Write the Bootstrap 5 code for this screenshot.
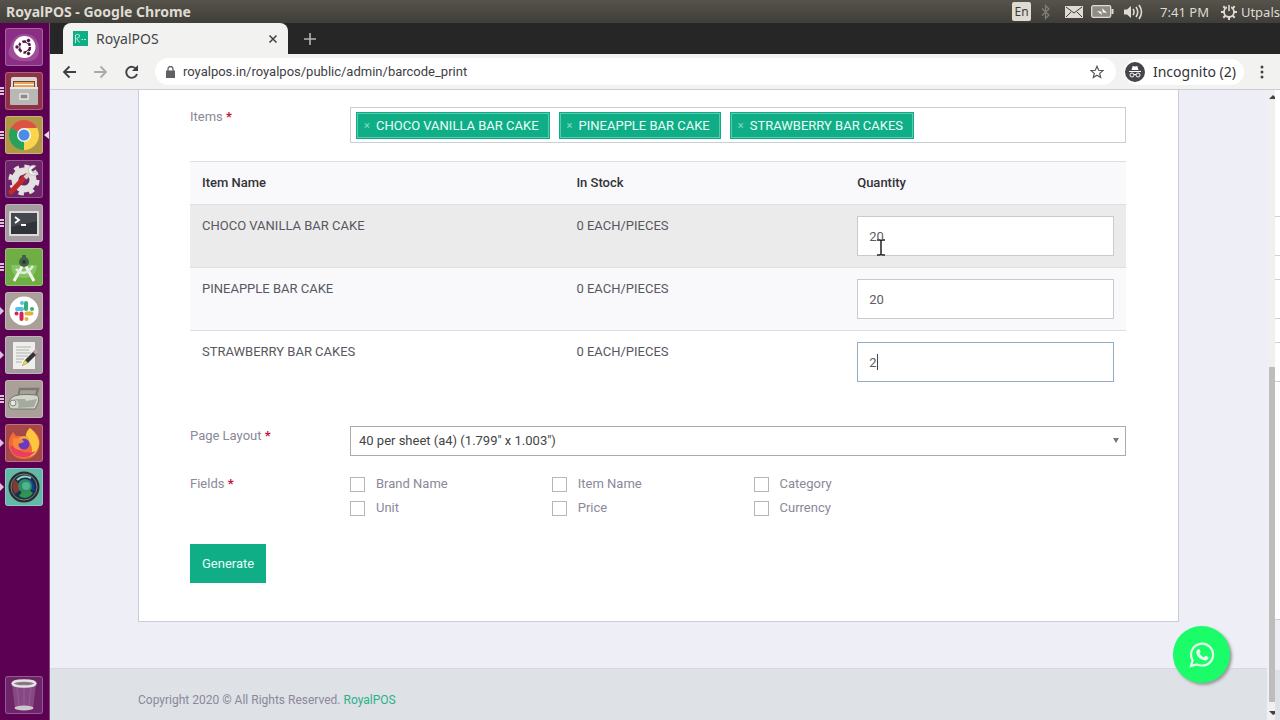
<!DOCTYPE html>
<html lang="en">
<head>
<meta charset="utf-8">
<meta name="viewport" content="width=device-width, initial-scale=1">
<title>RoyalPOS</title>
<link rel="stylesheet" href="https://cdn.jsdelivr.net/npm/bootstrap@5.3.0/dist/css/bootstrap.min.css">
<style>
:root { --green: #10ae87; --line: #ccccd4; }
body { font-family: Roboto, "Liberation Sans", sans-serif; font-size: 13px; line-height: 20px; color: #58575f; background: #eeeef7; }
.ui-font { font-family: "Noto Sans", "Open Sans", sans-serif; }
.panel-bar { height: 23px; padding-left: 6px; background: linear-gradient(#55534a, #3f3e39); color: #dfdbd2; font-size: 13px; }
.panel-bar .title-text { font-weight: 700; font-size: 14px; }
.lang-box { background: #dfdbd2; color: #3c3b37; border-radius: 2px; width: 19px; height: 19px; line-height: 19px; font-size: 12px; text-align: center; }
.launcher { width: 50px; background: #5b0052; border-right: 1px solid #8a4a84; padding: 5px 0 6px 5px; gap: 6px; }
.tile { width: 38px; height: 38px; border-radius: 3px; border: 1px solid #ffffff40; padding: 0; display: block; position: relative; flex: none; }
.tile > svg { display: block; width: 36px; height: 36px; }
.tile > svg.here { position: absolute; left: 38px; top: 14px; width: 5px; height: 8px; }
.pips { position: absolute; left: -6px; top: 12px; width: 5px; height: 12px; color: #d9c3d7; }
.pips::before { content: ""; position: absolute; left: 0; top: 2px; border: 4px solid transparent; border-left-color: currentColor; border-right: 0; }
.pips.multi::before { border: 0; width: 4px; height: 8px; background: repeating-linear-gradient(currentColor 0 2px, transparent 2px 3px); }
.t-plum { background: #8b2f84; } .t-red { background: #8d3348; } .t-gold { background: #b39749; } .t-dark { background: #6e2469; }
.t-gray { background: #a39da0; } .t-lime { background: #6fae45; } .t-stone { background: #aba099; } .t-rust { background: #a4484a; } .t-teal { background: #64b8a8; }
.tab-strip { height: 31px; background: #262626; }
.browser-tab { width: 225px; margin-left: 13px; background: #f2f2f0; border-radius: 8px 8px 0 0; color: #45464a; font-size: 14px; padding: 0 8px 0 10px; }
.bare { border: 0; background: none; padding: 0; line-height: 0; color: inherit; }
.tool-bar { height: 36px; background: #f2f2f0; border-bottom: 1px solid var(--line); color: #45464a; }
.address { background: #fff; border-radius: 14px; height: 27px; padding: 0 12px 0 11px; }
.address input { border: 0; outline: 0; background: none; font-family: Roboto, sans-serif; font-size: 13px; color: #3f4044; min-width: 0; }
.incognito { background: #fff; border-radius: 13px; height: 26px; font-size: 14px; color: #333438; padding: 0 8px 0 1px; }
.sheet { background: #fff; border: 1px solid var(--line); border-top: 0; margin: 0 88px 46px; padding: 17px 52px 38px 51px; }
.form-line { display: flex; }
.field-name { flex: 0 0 160px; color: #8b8899; }
.field-name b { color: #c8103c; }
.tag-field { border: 1px solid var(--line); min-height: 36px; padding: 4px 5px 3px; gap: 9px; }
.item-tag { background: var(--green); color: #e9fff8; height: 27px; border: 1px solid var(--green); box-shadow: inset 0 0 0 1px #5cc9ac; padding: 0 10px 0 7px; gap: 6px; }
.item-tag button { color: #8cdcc7; width: 6px; font-size: 11px; line-height: 20px; }
.stock { margin: 18px 0 33px; color: #58575f; }
.stock > :not(caption) > * > * { padding: 11px 12px; border: 0; border-top: 1px solid #dedfe3; background: transparent; box-shadow: none; color: inherit; }
.stock thead { background: #f9f9fc; color: #333238; }
.stock th { font-weight: 500; }
.stock tr.hot { background: #ebebec; } .stock tr.soft { background: #f9f9fc; }
.stock .qty { display: block; width: 100%; height: 40px; border: 1px solid #c8cad2; padding: 0 11px; color: #5c5c62; background: #fff; outline: 0; border-radius: 0; }
.stock .qty.active { border-color: #92abc8; }
.caret { position: absolute; left: 20px; top: 12px; width: 1px; height: 16px; background: #444; }
.ibeam { position: absolute; left: 20px; top: 23px; width: 8px; height: 17px; }
.pick { position: relative; margin-bottom: 18px; }
.pick select { display: block; width: 100%; height: 30px; appearance: none; border: 1px solid #aaa; border-radius: 0; background: #fff; color: #444; padding: 0 8px; outline: 0; }
.pick::after { content: ""; position: absolute; right: 7px; top: 12px; border: 3px solid transparent; border-top: 5px solid #777; border-bottom: 0; }
.checks { display: grid; grid-template-columns: 26% 26% auto; row-gap: 4px; margin-bottom: 26px; color: #8b8899; }
.checks label { display: flex; align-items: center; gap: 11px; height: 20px; }
.checks input { appearance: none; width: 15px; height: 15px; border: 1px solid #b5b5ba; background: #fff; margin: 0; }
.btn-make { --bs-btn-bg: #10ae87; --bs-btn-color: #e9fff8; --bs-btn-border-color: #10ae87; --bs-btn-hover-bg: #0d9977; --bs-btn-hover-color: #fff; --bs-btn-border-radius: 0; --bs-btn-font-size: 13px; --bs-btn-line-height: 19px; --bs-btn-padding-x: 11px; --bs-btn-padding-y: 9px; display: block; font-weight: 400; line-height: 19px; }
.page-foot { background: #dee1e6; border-top: 1px solid #d8d9e0; padding: 21px 88px 30px; color: #8b8899; font-size: 12px; }
.page-foot a { color: #2bb28b; text-decoration: none; }
.chat { position: absolute; right: 37px; bottom: 37px; width: 57px; height: 57px; border-radius: 50%; background: #1bfc69; box-shadow: 2px 2px 3px #999; border: 0; padding: 0; }
.scroller { width: 8px; background: #f0f0f0; position: relative; flex: none; }
.scroller i { position: absolute; left: 2px; right: 0; top: 44%; bottom: 18px; background: #bdbdbd; }
.scroller svg { position: absolute; left: 2px; width: 6px; height: 5px; }
.edge { width: 5px; flex: none; background: linear-gradient(#fff 84%, #ccccd4 84% 84.2%, #eeeef7 84.2% 92%, #dee1e6 92%); padding-top: 126px; }
.edge i { display: block; height: 40px; border-top: 1px solid #d0d0d4; border-bottom: 1px solid #d0d0d4; margin-bottom: 23px; }
</style>
</head>
<body>
<div class="vh-100 d-flex flex-column overflow-hidden">
  <header class="panel-bar ui-font d-flex align-items-center justify-content-between flex-shrink-0 overflow-hidden">
    <span class="title-text">RoyalPOS - Google Chrome</span>
    <div class="d-flex align-items-center text-nowrap">
      <span class="lang-box">En</span>
      <svg class="ms-2 me-1" width="14" height="16" viewBox="0 0 14 16" fill="none" stroke="#7f7d75" stroke-width="1.3"><path d="M3 4.500l7 6.500-3.500 3.500v-13L10 5 3 11.500"/></svg>
      <svg class="ms-2" width="18" height="12" viewBox="0 0 18 12"><path fill="#dfdbd2" d="M0 0h18v12H0z"/><path d="M1 1l8 6 8-6M1 11l5-5M17 11l-5-5" fill="none" stroke="#3c3b37"/></svg>
      <svg class="ms-2" width="23" height="13" viewBox="0 0 23 13"><rect x=".7" y=".7" width="19" height="11.600" rx="1.500" fill="#8e8c84" stroke="#dfdbd2" stroke-width="1.300"/><path d="M20.500 4h2v5h-2" fill="#dfdbd2"/><path d="M6 6l6 1-1-4 5 5-6-1 1 3z" fill="#fff"/></svg>
      <svg class="ms-2 me-3" width="22" height="16" viewBox="0 0 22 16"><path d="M2 5.500h3L9 2v12L5 10.500H2z" fill="#dfdbd2"/><path d="M11 5q2 3 0 6M14 3q3.500 5 0 10M17 1q5 7 0 14" fill="none" stroke="#dfdbd2" stroke-width="1.600"/></svg>
      <span class="pe-1">7:41 PM</span>
      <svg class="ms-2 me-1" width="16" height="16" viewBox="0 0 16 16" fill="none" stroke="#dfdbd2"><circle cx="8" cy="8" r="5" stroke-width="1.800"/><path d="M8 13v3M0 8h3M13 8h3M2.300 2.300l2 2M11.700 11.700l2 2M2.300 13.700l2-2M11.700 4.300l2-2" stroke-width="2"/><path d="M8 1v6" stroke="#4a4942" stroke-width="4"/><path d="M8 1v6" stroke-width="1.600"/></svg>
      <span>Utpals</span>
    </div>
  </header>

  <div class="d-flex flex-grow-1 overflow-hidden">
    <nav class="launcher d-flex flex-column flex-shrink-0" aria-label="Launcher">
      <button class="tile t-plum" aria-label="Dash"><svg viewBox="0 0 36 36"><path d="M4 18Q8 4 20 5T33 20 16 32 4 18" fill="#b469ae" opacity=".5"/><circle cx="18.500" cy="18" r="11" fill="#fff"/><circle cx="18.500" cy="18" r="5.500" fill="none" stroke="#4b1744" stroke-width="2.500" stroke-dasharray="9.500 2"/><g fill="#4b1744" stroke="#fff"><circle cx="11" cy="18" r="2.200"/><circle cx="22.500" cy="11.500" r="2.200"/><circle cx="22.500" cy="24.500" r="2.200"/></g></svg></button>
      <button class="tile t-red" aria-label="Files"><span class="pips multi"></span><svg viewBox="0 0 36 36"><path d="M5 6q0-2 2-2h22q2 0 2 2v10H5z" fill="#ddd9d2"/><path d="M7 8h22v8H7z" fill="#6b4a35"/><path d="M8 9h20v5H8z" fill="#e9a05d"/><path d="M8 11h20v1H8z" fill="#fff"/><path d="M4 14h28v17q0 1-1 1H5q-1 0-1-1z" fill="#b9b8b5"/><path d="M4 14h28v2H4z" fill="#e8e7e4"/><rect x="14" y="21" width="8" height="5" fill="#8e8d8a" stroke="#fff"/></svg></button>
      <button class="tile t-gold" aria-label="Google Chrome"><span class="pips multi"></span><svg viewBox="0 0 36 36"><path d="M18 18L5.010 10.500A15 15 0 0 1 30.990 10.500z" fill="#de5145"/><path d="M18 18L30.990 10.500A15 15 0 0 1 18 33z" fill="#fad44b"/><path d="M18 18L18 33A15 15 0 0 1 5.010 10.500z" fill="#28a15b"/><path d="M18 11h13l1 4H18z" fill="#fad44b"/><path d="M24 21l-6 12 5-1 7-12z" fill="#fad44b"/><path d="M12 21L5 11l2 14 9 2z" fill="#28a15b"/><circle cx="18" cy="18" r="7" fill="#f5f5f5"/><circle cx="18" cy="18" r="5.500" fill="#4b8bea"/></svg><svg class="here" viewBox="0 0 5 8"><path d="M5 0v8L0 4z" fill="#e6d6e4"/></svg></button>
      <button class="tile t-dark" aria-label="System Settings"><svg viewBox="0 0 36 36"><circle cx="18" cy="19" r="9" fill="none" stroke="#e3e1df" stroke-width="7"/><circle cx="18" cy="19" r="13.500" fill="none" stroke="#e3e1df" stroke-width="4" stroke-dasharray="5.300 5.300"/><path d="M5 31L20 15" stroke="#c02a2a" stroke-width="5" stroke-linecap="round"/><path d="M19 17l6-6" stroke="#d7d5d3" stroke-width="4"/><path d="M30 5a5 5 0 1 0 2 6l-5 1-2-3z" fill="#f4f3f2" stroke="#aaa" stroke-width=".6"/></svg></button>
      <button class="tile t-gray" aria-label="Terminal"><span class="pips multi"></span><svg viewBox="0 0 36 36"><rect x="3" y="6" width="30" height="25" rx="1" fill="#dcdcd8"/><rect x="5" y="8" width="26" height="21" fill="#30343a"/><path d="M5 8h26v8L5 22z" fill="#444950"/><path d="M9 12l4 3-4 3M15 20h5" fill="none" stroke="#fff" stroke-width="1.800"/></svg></button>
      <button class="tile t-lime" aria-label="Android Studio"><span class="pips multi"></span><svg viewBox="0 0 36 36"><path d="M5 16h26q-1 13-13 13T5 16" fill="#84c663"/><path d="M18 14L8 32M18 14l10 18" stroke="#f2f5ef" stroke-width="3"/><path d="M10 20q8 9 17-3" fill="none" stroke="#e5ebe0" stroke-width="2.500"/><circle cx="18" cy="13" r="5" fill="#44604b"/><path d="M16 6h4v4h-4z" fill="#44604b"/><circle cx="18" cy="13" r="2" fill="#243d30"/></svg></button>
      <button class="tile t-stone" aria-label="Slack"><span class="pips"></span><svg viewBox="0 0 36 36"><circle cx="18" cy="18" r="14.500" fill="#fff"/><g stroke-width="4" stroke-linecap="round"><path d="M11 16h5M16 10v.1" stroke="#4cc4e8"/><path d="M20 10v6M26 16v.1" stroke="#36ae7c"/><path d="M20.500 20.500h5M20.500 26v.1" stroke="#e6b03a"/><path d="M15.500 20.500v5.500M10.500 20.500v.1" stroke="#d32658"/></g></svg></button>
      <button class="tile t-gray" aria-label="Text Editor"><span class="pips"></span><svg viewBox="0 0 36 36"><path d="M7 5h22v27H7z" fill="#eeeeea"/><path d="M10 10h15M10 13h13M10 16h15M10 19h12M10 22h8M10 25h6" stroke="#b0b0ad"/><path d="M16 29l3-6L29 13l3 3-10 10z" fill="#343434"/><path d="M16 29l3-6 3 3z" fill="#e7d64f"/><path d="M27 15l3-3 3 3-3 3z" fill="#c69bb5"/></svg></button>
      <button class="tile t-stone" aria-label="Printer"><span class="pips multi"></span><svg viewBox="0 0 36 36"><path d="M13 8h19l-3 10" fill="none" stroke="#777a74" stroke-width="2.500"/><path d="M14 7l-2 9" stroke="#777a74" stroke-width="2"/><path d="M5 17q5-5 25-3 4 1 2 8l-3 6H5q-5-4 0-11" fill="#d2d5ca" stroke="#72766e"/><path d="M8 18q6 2 4 9l16-1 3-8-11 2-1-2z" fill="#a6aba0"/><circle cx="7" cy="22" r="3" fill="#e5e7df" stroke="#82867d"/></svg></button>
      <button class="tile t-rust" aria-label="Firefox"><span class="pips"></span><svg viewBox="0 0 36 36"><path d="M4 12l3-5 3 4q5-1 8 3l6-1 0-10q12 8 9 19-3 12-15 12T3 22q-1-5 1-10" fill="#f26b37"/><path d="M20 11q0-5 4-8 10 8 9 17-2 9-9 12 4-7 0-14z" fill="#fdc63e"/><path d="M4 20q1 12 13 12 8 0 13-6-10 4-18-2z" fill="#e93f62"/><path d="M11 15l6-1 1 3-4 3q3 4 8 0 3-4 0-8-6-3-11 3" fill="#f9a43a"/><circle cx="18" cy="19" r="5.500" fill="#673cc0"/><path d="M7 13l9 1 2 3-6 2q0 5 5 6-9 1-10-6z" fill="#f7893a"/></svg></button>
      <button class="tile t-teal" aria-label="Camera"><span class="pips"></span><svg viewBox="0 0 36 36"><circle cx="18" cy="18" r="15.500" fill="#2a2c2e"/><circle cx="18" cy="18" r="13" fill="#16324a" stroke="#787c7e"/><path d="M8 10q-4 8 1 15l8-6z" fill="#843930"/><path d="M13 27q8 5 14-3l-8-6z" fill="#2d974d"/><path d="M24 9q6 7 4 13l-9-4z" fill="#153c9a"/><circle cx="19" cy="17" r="7" fill="#2f8a6a"/><circle cx="20" cy="17" r="4" fill="#50b48c"/><path d="M11 11q6-6 14-2" fill="none" stroke="#9bd2bc" stroke-width="2"/></svg></button>
      <button class="tile t-dark mt-auto" aria-label="Trash"><svg viewBox="0 0 36 36"><path d="M6 7l3 24q9 4 18 0l3-24z" fill="#a775a5" opacity=".45"/><path d="M11 11l2 17M18 11v17M25 11l-2 17" stroke="#bd93bb" opacity=".3"/><ellipse cx="18" cy="6.500" rx="11.500" ry="3" fill="#8a7889" stroke="#e5e3e4" stroke-width="2.500"/><ellipse cx="18" cy="31" rx="9.500" ry="2.500" fill="#cfc6ce"/></svg></button>
    </nav>

    <div class="d-flex flex-column flex-grow-1 overflow-hidden">
      <div class="tab-strip ui-font d-flex flex-shrink-0">
        <div class="browser-tab d-flex align-items-center">
          <svg class="me-2" width="15" height="15" viewBox="0 0 15 15"><path fill="#10ae87" d="M0 0h15v15H0z"/><path d="M2.500 12V4q4-2 4 1 0 2-3 2.500l3 4M8.500 8.500h1.500M11 8.500h2" fill="none" stroke="#b7eadb"/></svg>
          <span>RoyalPOS</span>
          <button class="bare ms-auto" aria-label="Close tab"><svg width="14" height="14" viewBox="0 0 14 14" stroke="currentColor" stroke-width="1.600"><path d="M3.500 3.500l7 7M10.500 3.500l-7 7"/></svg></button>
        </div>
        <button class="bare ms-3" aria-label="New tab"><svg width="12" height="12" viewBox="0 0 12 12" stroke="#b5b5b5" stroke-width="1.600"><path d="M6 0v12M0 6h12"/></svg></button>
      </div>
      <div class="tool-bar ui-font d-flex align-items-center flex-shrink-0 ps-2">
        <div class="d-flex ps-1 gap-3">
          <button class="bare" aria-label="Back"><svg width="15" height="14" viewBox="0 0 15 14" fill="none" stroke="#3f4043" stroke-width="1.800"><path d="M14 7H2M7.500 1.500L2 7l5.500 5.500"/></svg></button>
          <button class="bare" aria-label="Forward"><svg width="15" height="14" viewBox="0 0 15 14" fill="none" stroke="#a9a9aa" stroke-width="1.800"><path d="M1 7h12M7.500 1.500L13 7l-5.500 5.500"/></svg></button>
          <button class="bare" aria-label="Reload"><svg width="15" height="14" viewBox="0 0 15 14"><path d="M12.500 4.500A5.500 5.500 0 1 0 13 9" fill="none" stroke="#3f4043" stroke-width="1.900"/><path d="M14 0v6H8z" fill="#3f4043"/></svg></button>
        </div>
        <div class="address d-flex align-items-center flex-grow-1 ms-3">
          <svg class="me-2" width="9" height="12" viewBox="0 0 9 12"><path d="M0 4.500h9V12H0z" fill="#5f6063"/><path d="M2 5V3a2.500 2.500 0 0 1 5 0v2" fill="none" stroke="#5f6063" stroke-width="1.300"/></svg>
          <input class="flex-grow-1 p-0" type="text" aria-label="Address" value="royalpos.in/royalpos/public/admin/barcode_print">
          <button class="bare ms-2" aria-label="Bookmark"><svg width="14" height="14" viewBox="0 0 14 14" fill="none" stroke="#55565a" stroke-width="1.200"><path d="M7 1.300l1.700 4 4.200.3-3.200 2.800 1 4.100L7 10.300l-3.700 2.200 1-4.100L1.100 5.600l4.200-.3z"/></svg></button>
        </div>
        <button class="bare incognito d-flex align-items-center gap-2 mx-2 text-nowrap"><svg width="20" height="20" viewBox="0 0 20 20"><circle cx="10" cy="10" r="10" fill="#45464a"/><path d="M6.500 8l1.200-4L10 4.500l2.300-.5 1.200 4zM4 9h12v1H4z" fill="#fff"/><g fill="none" stroke="#fff"><circle cx="7" cy="13" r="2"/><circle cx="13" cy="13" r="2"/><path d="M9 12.700q1-.7 2 0"/></g></svg>Incognito (2)</button>
        <button class="bare ms-2 me-3" aria-label="Menu"><svg width="4" height="14" viewBox="0 0 4 14" fill="#45464a"><circle cx="2" cy="2" r="1.500"/><circle cx="2" cy="7" r="1.500"/><circle cx="2" cy="12" r="1.500"/></svg></button>
      </div>

      <div class="d-flex flex-grow-1 overflow-hidden">
        <div class="flex-grow-1 position-relative overflow-hidden d-flex flex-column">
          <main class="flex-shrink-0">
            <form class="sheet" onsubmit="return false">
              <div class="form-line">
                <div class="field-name">Items <b>*</b></div>
                <div class="tag-field d-flex flex-wrap flex-grow-1">
                  <span class="item-tag d-flex align-items-center"><button type="button" class="bare" aria-label="Remove">×</button>CHOCO VANILLA BAR CAKE</span>
                  <span class="item-tag d-flex align-items-center"><button type="button" class="bare" aria-label="Remove">×</button>PINEAPPLE BAR CAKE</span>
                  <span class="item-tag d-flex align-items-center"><button type="button" class="bare" aria-label="Remove">×</button>STRAWBERRY BAR CAKES</span>
                </div>
              </div>
              <table class="table stock">
                <colgroup><col style="width:40%"><col style="width:30%"><col style="width:30%"></colgroup>
                <thead><tr><th>Item Name</th><th>In Stock</th><th>Quantity</th></tr></thead>
                <tbody>
                  <tr class="hot"><td>CHOCO VANILLA BAR CAKE</td><td>0 EACH/PIECES</td><td><div class="position-relative"><input class="qty" type="text" aria-label="Quantity of Choco Vanilla Bar Cake" value="20"><svg class="ibeam" viewBox="0 0 8 17"><path d="M0 1h3l1 1 1-1h3M0 16h3l1-1 1 1h3M4 2v13" fill="none" stroke="#fff" stroke-width="3"/><path d="M0 1h3l1 1 1-1h3M0 16h3l1-1 1 1h3M4 2v13" fill="none" stroke="#222" stroke-width="1.500"/></svg></div></td></tr>
                  <tr class="soft"><td>PINEAPPLE BAR CAKE</td><td>0 EACH/PIECES</td><td><input class="qty" type="text" aria-label="Quantity of Pineapple Bar Cake" value="20"></td></tr>
                  <tr><td>STRAWBERRY BAR CAKES</td><td>0 EACH/PIECES</td><td><div class="position-relative"><input class="qty active" type="text" aria-label="Quantity of Strawberry Bar Cakes" value="2"><span class="caret"></span></div></td></tr>
                </tbody>
              </table>
              <div class="form-line">
                <label class="field-name" for="layout">Page Layout <b>*</b></label>
                <div class="pick flex-grow-1"><select id="layout"><option>40 per sheet (a4) (1.799" x 1.003")</option></select></div>
              </div>
              <div class="form-line">
                <div class="field-name">Fields <b>*</b></div>
                <div class="checks flex-grow-1">
                  <label><input type="checkbox">Brand Name</label><label><input type="checkbox">Item Name</label><label><input type="checkbox">Category</label>
                  <label><input type="checkbox">Unit</label><label><input type="checkbox">Price</label><label><input type="checkbox">Currency</label>
                </div>
              </div>
              <button class="btn btn-make" type="submit">Generate</button>
            </form>
          </main>
          <footer class="page-foot flex-grow-1 flex-shrink-0">Copyright 2020 © All Rights Reserved. <a href="#">RoyalPOS</a></footer>
          <button class="chat" aria-label="WhatsApp chat"><svg width="26" height="26" viewBox="0 0 26 26"><path d="M2 24l1.600-5.800A11 11 0 1 1 8 22.400z" fill="none" stroke="#e6ffef" stroke-width="2.200"/><path d="M9.500 7q.8-.2 1.200.6l.9 2.100q.2.500-.2.900l-.8 1q1.500 2.700 4.300 3.800l1.200-1.400q.4-.4.900-.2l2.200 1.100q.5.300.3 1-.6 2.600-3.600 2.500Q9 17.400 7.400 11.200 7 8 9.500 7" fill="#e6ffef"/></svg></button>
        </div>
        <div class="scroller">
          <svg class="top-0 mt-1" viewBox="0 0 6 5"><path d="M0 5l4-4 2 2v2z" fill="#444"/></svg>
          <i></i>
          <svg class="bottom-0 mb-1" viewBox="0 0 6 5"><path d="M0 0h6v3L4 4z" fill="#444"/></svg>
        </div>
        <div class="edge"><i></i><i></i><i></i></div>
      </div>
    </div>
  </div>
</div>
<script src="https://cdn.jsdelivr.net/npm/bootstrap@5.3.0/dist/js/bootstrap.bundle.min.js"></script>
</body>
</html>
